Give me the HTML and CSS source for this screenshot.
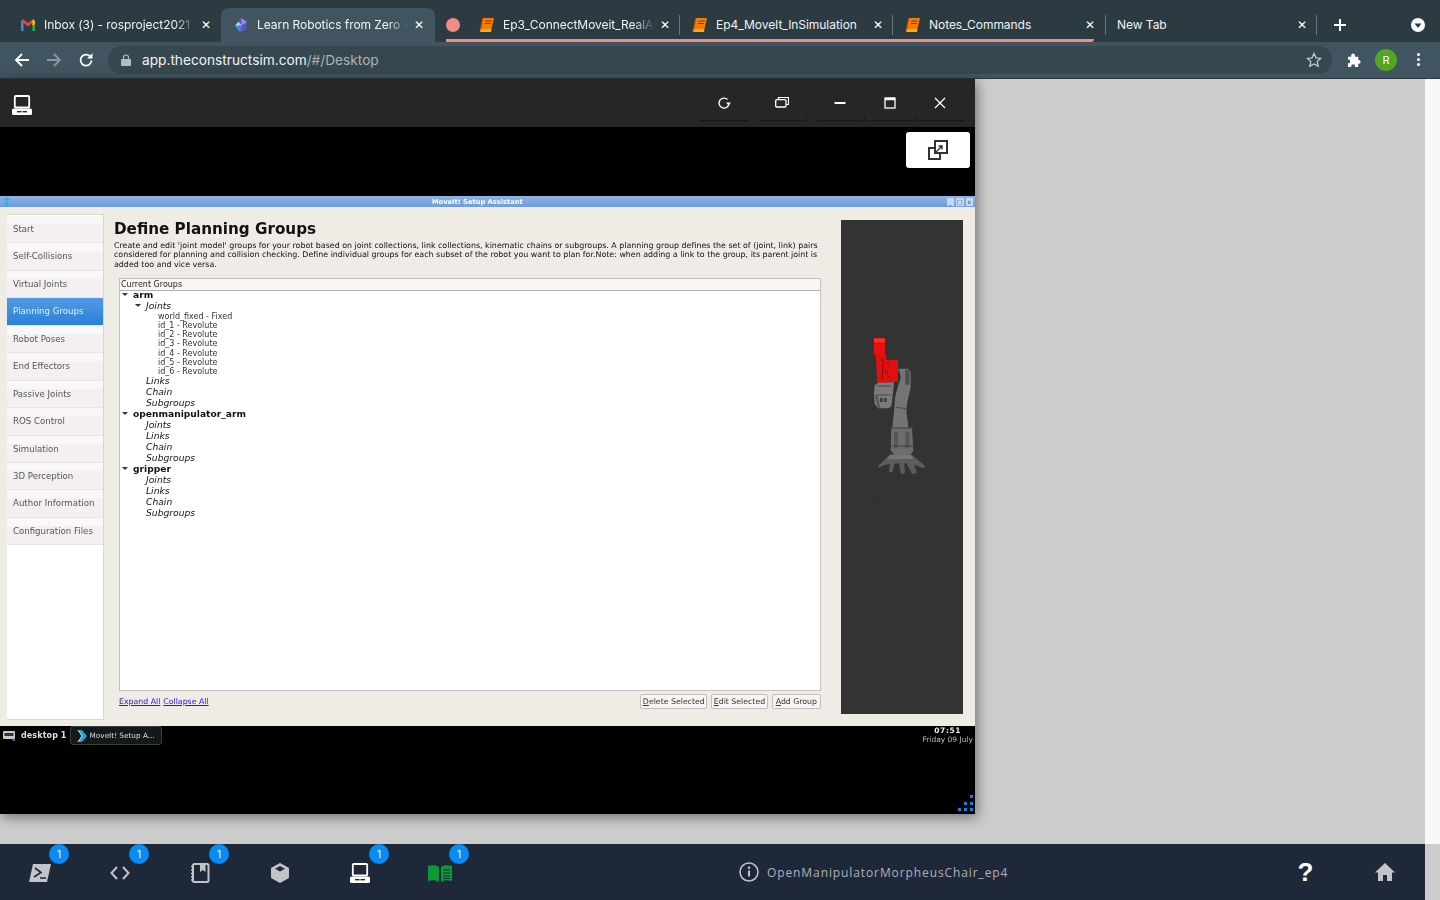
FILE: index.html
```html
<!DOCTYPE html>
<html lang="en">

<head>
    <meta charset="UTF-8">
    <title>Learn Robotics from Zero</title>
    <link rel="stylesheet" href="styles.css">
</head>

<body>
    <div class="tabstrip">
        <div class="tab tab-first">
            <svg class="favicon" viewBox="0 0 16 16"><path d="M1 14V4l2.500-1.500V14z" fill="#4285f4"/><path d="M15 14V4l-2.500-1.500V14z" fill="#34a853"/><path d="M1 4l7 5.500 7-5.500-2-2-5 4-5-4z" fill="#ea4335"/><path d="M12.500 2.500L15 4v3l-2.500 2z" fill="#fbbc04"/></svg>
            <span class="tab-title tab-fade">Inbox (3) - rosproject2021</span>
            <span class="tab-close">&#10005;</span>
        </div>
        <div class="tab tab-active">
            <svg class="favicon" viewBox="0 0 16 16"><path d="M8 1l6 4-1 8-6 2-5-6z" fill="#5a55c8"/><path d="M8 1l6 4-5 3z" fill="#9a8ee8"/><path d="M2 9l5 6 2-7z" fill="#3d8fd8"/><path d="M2 9l3-4 4 3z" fill="#bcd7f2"/></svg>
            <span class="tab-title tab-fade">Learn Robotics from Zero -</span>
            <span class="tab-close">&#10005;</span>
        </div>
        <div class="tab-group">
            <div class="group-dot-box"><span class="group-dot"></span></div>
            <div class="tab tab-grouped tab-ep3">
                <svg class="favicon" viewBox="0 0 16 16"><use href="#book"/></svg>
                <span class="tab-title tab-fade">Ep3_ConnectMoveit_RealA</span>
                <span class="tab-close">&#10005;</span>
            </div>
            <div class="tab tab-grouped">
                <svg class="favicon" viewBox="0 0 16 16"><use href="#book"/></svg>
                <span class="tab-title">Ep4_MoveIt_InSimulation</span>
                <span class="tab-close">&#10005;</span>
            </div>
            <div class="tab tab-grouped tab-last">
                <svg class="favicon" viewBox="0 0 16 16"><use href="#book"/></svg>
                <span class="tab-title">Notes_Commands</span>
                <span class="tab-close">&#10005;</span>
            </div>
        </div>
        <div class="tab tab-new">
            <span class="tab-title">New Tab</span>
            <span class="tab-close">&#10005;</span>
        </div>
        <svg class="new-tab" viewBox="0 0 14 14"><path d="M7 1v12M1 7h12" stroke="#fff" stroke-width="2"/></svg>
        <svg class="tab-search" viewBox="0 0 14 14"><circle cx="7" cy="7" r="7" fill="#fff"/><path d="M3.500 5.500h7L7 10z" fill="#2c3a42"/></svg>
    </div>

    <div class="toolbar">
        <svg class="nav-icon" viewBox="0 0 16 16"><path d="M15 8H2M8 2L2 8l6 6" fill="none" stroke="#fff" stroke-width="1.800"/></svg>
        <svg class="nav-icon" viewBox="0 0 16 16"><path d="M1 8h13M8 2l6 6-6 6" fill="none" stroke="#8b989f" stroke-width="1.800"/></svg>
        <svg class="nav-icon" viewBox="0 0 16 16"><path d="M13.500 8.500a5.500 5.500 0 1 1-1.600-4.300" fill="none" stroke="#fff" stroke-width="1.800"/><path d="M14.500 1v5.500H9z" fill="#fff"/></svg>
        <div class="omnibox">
            <svg class="lock" viewBox="0 0 10 12"><path d="M2.500 5V3.500a2.500 2.500 0 0 1 5 0V5" fill="none" stroke="#b4bcc1" stroke-width="1.200"/><rect y="5" width="10" height="7" rx="1" fill="#b4bcc1"/></svg>
            <span class="url">app.theconstructsim.com<span class="url-path">/#/Desktop</span></span>
            <svg class="star" viewBox="0 0 16 16"><path d="M8 1.500l2 4.400 4.700.5-3.500 3.200 1 4.700L8 11.900l-4.200 2.400 1-4.700L1.300 6.400 6 5.900z" fill="none" stroke="#c4cbcf" stroke-width="1.300"/></svg>
        </div>
        <svg class="puzzle" viewBox="0 0 16 16"><path d="M1 5h3.500V3.500a2 2 0 0 1 4 0V5H12v3.500h.5a2 2 0 0 1 0 4H12V16H8.500v-1a2 2 0 0 0-4 0v1H1v-4h.5a2 2 0 0 0 0-4H1z" fill="#fff"/></svg>
        <span class="avatar">R</span>
        <span class="menu-dots"><i></i><i></i><i></i></span>
    </div>

    <div class="main">
        <div class="stage">
            <div class="desktop">
                <div class="desk-head">
                    <svg class="desk-logo" viewBox="0 0 20 20"><use href="#computer"/></svg>
                    <div class="desk-controls">
                        <button class="ctl ctl-gap"><svg viewBox="0 0 14 14"><path d="M12 7a5 5 0 1 1-1.500-3.500" fill="none" stroke="#fff" stroke-width="1.300"/><path d="M14 6.500L11.500 9.500 9 6.500z" fill="#fff"/></svg></button>
                        <button class="ctl ctl-gap"><svg viewBox="0 0 14 14"><path d="M3.500 3V1.500h10v7H11" fill="none" stroke="#fff" stroke-width="1.200"/><rect x="0.700" y="3.700" width="10.300" height="7.300" rx="1" fill="none" stroke="#fff" stroke-width="1.300"/></svg></button>
                        <button class="ctl"><svg viewBox="0 0 14 14"><path d="M1.500 7h11" stroke="#fff" stroke-width="2"/></svg></button>
                        <button class="ctl"><svg viewBox="0 0 14 14"><rect x="2" y="2" width="10" height="10" fill="none" stroke="#fff" stroke-width="1.300"/><path d="M2 3h10" stroke="#fff" stroke-width="2.500"/></svg></button>
                        <button class="ctl"><svg viewBox="0 0 14 14"><path d="M2 2l10 10M12 2L2 12" stroke="#fff" stroke-width="1.300"/></svg></button>
                    </div>
                </div>

                <div class="vnc-top">
                    <button class="popout"><svg viewBox="0 0 20 20"><rect x="1" y="8" width="11" height="11" fill="none" stroke="#333" stroke-width="2"/><rect x="7" y="1" width="12" height="12" fill="#fff" stroke="#333" stroke-width="2"/><path d="M8 12l6-6M10.500 6H14v3.500" fill="none" stroke="#333" stroke-width="1.400"/></svg></button>
                </div>

                <div class="setup-window">
                    <div class="wm-title">
                        <svg class="wm-logo" viewBox="0 0 6 10"><path d="M3 0v10M0 2.500h6M0 7h6" stroke="#1fb0e8" stroke-width="1.200"/></svg>
                        <span class="wm-name">MoveIt! Setup Assistant</span>
                        <span class="wm-btns"><i>_</i><i>&#9633;</i><i>x</i></span>
                    </div>
                    <div class="setup-body">
                        <div class="steps">
                            <div class="step">Start</div>
                            <div class="step">Self-Collisions</div>
                            <div class="step">Virtual Joints</div>
                            <div class="step step-on">Planning Groups</div>
                            <div class="step">Robot Poses</div>
                            <div class="step">End Effectors</div>
                            <div class="step">Passive Joints</div>
                            <div class="step">ROS Control</div>
                            <div class="step">Simulation</div>
                            <div class="step">3D Perception</div>
                            <div class="step">Author Information</div>
                            <div class="step">Configuration Files</div>
                        </div>

                        <div class="groups">
                            <h1>Define Planning Groups</h1>
                            <p>Create and edit 'joint model' groups for your robot based on joint collections, link collections, kinematic chains or subgroups. A planning group defines the set of (joint, link) pairs considered for planning and collision checking. Define individual groups for each subset of the robot you want to plan for.Note: when adding a link to the group, its parent joint is added too and vice versa.</p>
                            <div class="tree">
                                <div class="tree-head">Current Groups</div>
                                <div class="tree-rows">
                                    <div class="row row-group"><i class="caret"></i>arm</div>
                                    <div class="row row-sub row-open"><i class="caret"></i>Joints</div>
                                    <div class="row row-joint">world_fixed - Fixed</div>
                                    <div class="row row-joint">id_1 - Revolute</div>
                                    <div class="row row-joint">id_2 - Revolute</div>
                                    <div class="row row-joint">id_3 - Revolute</div>
                                    <div class="row row-joint">id_4 - Revolute</div>
                                    <div class="row row-joint">id_5 - Revolute</div>
                                    <div class="row row-joint">id_6 - Revolute</div>
                                    <div class="row row-sub">Links</div>
                                    <div class="row row-sub">Chain</div>
                                    <div class="row row-sub">Subgroups</div>
                                    <div class="row row-group"><i class="caret"></i>openmanipulator_arm</div>
                                    <div class="row row-sub">Joints</div>
                                    <div class="row row-sub">Links</div>
                                    <div class="row row-sub">Chain</div>
                                    <div class="row row-sub">Subgroups</div>
                                    <div class="row row-group"><i class="caret"></i>gripper</div>
                                    <div class="row row-sub">Joints</div>
                                    <div class="row row-sub">Links</div>
                                    <div class="row row-sub">Chain</div>
                                    <div class="row row-sub">Subgroups</div>
                                </div>
                            </div>
                            <div class="tree-actions">
                                <a href="#">Expand All</a>
                                <a href="#">Collapse All</a>
                                <span class="spacer"></span>
                                <button class="qt-btn"><u>D</u>elete Selected</button>
                                <button class="qt-btn"><u>E</u>dit Selected</button>
                                <button class="qt-btn qt-btn-add"><u>A</u>dd Group</button>
                            </div>
                        </div>

                        <div class="viewport">
                            <svg class="robot" viewBox="33 -300 366 1482">
                                <!-- base foot -->
                                <path d="M145 437l36-34h62l42 34-2 8-30-10 8 24-14 3-18-32-6 0 2 30-12 3-6-33-14 2-6 25-10 0 2-25-18 4-16 8z" fill="#5c5c5c"/>
                                <path d="M180 405h64l6 12h-78z" fill="#767676"/>
                                <!-- lower body -->
                                <path d="M184 322h62l4 70-10 14h-46l-12-16z" fill="#6d6d6d"/>
                                <path d="M192 335h12v50h-12zM226 335h12v50h-12z" fill="#565656"/>
                                <path d="M184 324h64M184 378h66" stroke="#3f3f3f" stroke-width="3"/>
                                <!-- upper arm -->
                                <path d="M205 146h30l7 10v45l-10 45-3 26 6 50h-48l5-48 3-36 5-34z" fill="#747474"/>
                                <path d="M207 148l-15 40-8 42 14-12 14-45z" fill="#2f2f2f"/>
                                <path d="M226 150h12v44h-12z" fill="#4d4d4d"/>
                                <path d="M198 262l30 4M206 312h4" stroke="#484848" stroke-width="3"/>
                                <!-- elbow -->
                                <path d="M134 195l14-8 44 0-2 22-6 50-10 6h-30l-10-14-2-26z" fill="#7b7b7b"/>
                                <path d="M140 198h44M138 225h46" stroke="#4c4c4c" stroke-width="3"/>
                                <path d="M150 234h8v12h-8zM162 234h8v12h-8z" fill="#3c3c3c"/>
                                <path d="M134 225l10 38 8 2-10-40z" fill="#585858"/>
                                <!-- red gripper -->
                                <path d="M132 55h33v50h-33z" fill="#e81010"/>
                                <path d="M137 105h32v15h35v65l-62 3z" fill="#e01010"/>
                                <path d="M132 55h33v12h-33z" fill="#f53030"/>
                                <path d="M152 115l8 12-4 50M165 150l12 20M170 128h8" stroke="#7a1010" stroke-width="3" fill="none"/>
                                <!-- stray red specks on the floor -->
                                <path d="M200 462h12M220 505h6M138 525v28M296 470v24" stroke="#5a2020" stroke-width="3"/>
                            </svg>
                        </div>
                    </div>
                </div>

                <div class="taskbar">
                    <div class="task-top">
                        <svg class="pager-icon" viewBox="0 0 13 10"><rect width="12" height="8" rx="1" fill="#c9c9c9"/><rect x="1.500" y="2" width="9" height="3" fill="#333"/><path d="M9 8l3 1.500" stroke="#3b7ac8" stroke-width="1.500"/></svg>
                        <span class="pager-name">desktop 1</span>
                        <div class="task-btn">
                            <svg viewBox="0 0 11 14"><path d="M1 1l4 0 5 6-5 6H1l4-6z" fill="#1fa6e0"/><path d="M1 1l4 6-4 6" fill="none" stroke="#fff" stroke-width=".8"/></svg>
                            <span>MoveIt! Setup A...</span>
                        </div>
                        <div class="clock">
                            <div class="clock-time">07:51</div>
                            <div class="clock-date">Friday 09 July</div>
                        </div>
                    </div>
                    <div class="task-foot">
                        <span class="grip"><i></i><i></i><i></i><i></i><i></i><i></i><i></i><i></i><i></i></span>
                    </div>
                </div>
            </div>
        </div>
        <div class="edge"></div>
    </div>

    <div class="dock">
        <div class="dock-item">
            <span class="badge">1</span>
            <svg viewBox="0 0 22 20" width="22" height="20"><path d="M4 1h18l-4 18H0z" fill="#c2c4c8"/><path d="M6 5l6 4.500-7 4.500" fill="none" stroke="#1e2838" stroke-width="1.600"/><path d="M11 15h6" stroke="#1e2838" stroke-width="1.500"/></svg>
        </div>
        <div class="dock-item">
            <span class="badge">1</span>
            <svg viewBox="0 0 20 14" width="20" height="14"><path d="M7 1L1.500 7 7 13M13 1l5.500 6L13 13" fill="none" stroke="#c2c4c8" stroke-width="2"/></svg>
        </div>
        <div class="dock-item">
            <span class="badge">1</span>
            <svg viewBox="0 0 20 20" width="20" height="20"><rect x="3" y="1" width="15.500" height="18" rx="1.500" fill="none" stroke="#c2c4c8" stroke-width="2"/><path d="M10 1h5.500v8l-2.700-2-2.800 2z" fill="#c2c4c8"/><path d="M1 3.500h3M1 7h3M1 10.500h3M1 14h3M1 17h3" stroke="#c2c4c8" stroke-width="1.300"/></svg>
        </div>
        <div class="dock-item">
            <svg viewBox="0 0 20 20" width="20" height="20"><path d="M10 0l9 5v10l-9 5-9-5V5z" fill="#c2c4c8"/><path d="M10 3l5 2.800-5 2.800-5-2.800z" fill="#1e2838"/></svg>
        </div>
        <div class="dock-item">
            <span class="badge">1</span>
            <svg viewBox="0 0 20 20" width="20" height="20"><use href="#computer"/></svg>
        </div>
        <div class="dock-item">
            <span class="badge">1</span>
            <svg viewBox="0 0 24 18" width="24" height="18"><path d="M0 2c4-1.500 8-1 11 1v15c-3-2-7-2-11-1z" fill="#0b9a35"/><path d="M24 2c-4-1.500-8-1-11 1v15c3-2 7-2 11-1z" fill="#0b9a35"/><path d="M15 6h7M15 9h7M15 12h7M15 14.500h7" stroke="#1e2838" stroke-width="1"/></svg>
        </div>
        <div class="sim-name">
            <svg viewBox="0 0 20 20" width="20" height="20"><circle cx="10" cy="10" r="9" fill="none" stroke="#c2c4c8" stroke-width="1.500"/><path d="M10 8.500v6" stroke="#c2c4c8" stroke-width="2"/><circle cx="10" cy="5.800" r="1.200" fill="#c2c4c8"/></svg>
            <span>OpenManipulatorMorpheusChair_ep4</span>
        </div>
        <span class="help">?</span>
        <svg class="home" viewBox="0 0 20 18" width="20" height="18"><path d="M10 0L0 9.500h3V18h5v-6h4v6h5V9.500h3z" fill="#c2c4c8"/></svg>
    </div>

    <svg class="defs" width="0" height="0">
        <symbol id="book" viewBox="0 0 16 16"><path d="M4 1h11l-2.500 11H2z" fill="#f57c00"/><path d="M2 12h10.500L12 15H2.500A1.500 1.500 0 0 1 2 12z" fill="#ffa726"/><path d="M1.500 13.500L4 1" stroke="#e65100" stroke-width="1.200"/><path d="M6.500 4h6M6 6.500h6" stroke="#7a3e00" stroke-width="1"/></symbol>
        <symbol id="computer" viewBox="0 0 20 20"><rect x="2.800" y="1" width="14.400" height="11.500" rx="1" fill="none" stroke="#fff" stroke-width="1.800"/><rect y="13.500" width="20" height="6.500" rx="1.500" fill="#fff"/><path d="M5 16.700h10" stroke="#1e1e1e" stroke-width="1.300"/><path d="M10 15.500v2.400" stroke="#fff" stroke-width="1"/></symbol>
    </svg>
</body>

</html>
```

FILE: styles.css
```css
html, body {
    margin: 0;
    height: 900px;
    overflow: hidden;
}

body {
    display: flex;
    flex-direction: column;
    font-family: 'Inter', 'Liberation Sans', sans-serif;
    background-color: #ccc;
}

.defs {
    display: none;
}

/* browser tabs */
.tabstrip {
    display: flex;
    align-items: stretch;
    height: 42px;
    padding: 8px 0 0 8px;
    box-sizing: border-box;
    background-color: #2c3a42;
}

.tabstrip > * {
    flex: none;
}

.tab {
    display: flex;
    flex: none;
    align-items: center;
    width: 213px;
    box-sizing: border-box;
    padding: 0 9px 0 12px;
    color: #f1f3f4;
    font-size: 12px;
    letter-spacing: -0.050px;
}

.tab-first {
    padding-bottom: 1px;
}

.tab-active {
    width: 214px;
    padding: 0 10px 1px 12px;
    background-color: #405560;
    border-radius: 8px 8px 0 0;
}

.favicon {
    flex: none;
    width: 16px;
    height: 16px;
    margin-right: 8px;
}

.tab-title {
    flex: 1;
    min-width: 0;
    overflow: hidden;
    white-space: nowrap;
}

.tab-fade {
    -webkit-mask-image: linear-gradient(to right, #000 86%, transparent 100%);
    mask-image: linear-gradient(to right, #000 86%, transparent 100%);
}

.tab-close {
    flex: none;
    width: 12px;
    margin-left: 4px;
    color: #fff;
    font-size: 12px;
    text-align: center;
}

.tab-group {
    display: flex;
    height: 34px;
    margin-left: 11px;
    border-bottom: 3px solid #f28b82;
    border-bottom-right-radius: 3px;
    box-sizing: border-box;
}

.group-dot-box {
    display: flex;
    align-items: center;
    width: 14px;
    padding-top: 3px;
}

.group-dot {
    width: 14px;
    height: 14px;
    border-radius: 50%;
    background-color: #f28b82;
}

.tab-grouped {
    position: relative;
    padding-top: 2px;
}

.tab-ep3 {
    margin-left: 7px;
}

.tab-grouped::after {
    content: '';
    position: absolute;
    right: 0;
    top: 7px;
    height: 20px;
    width: 1px;
    background-color: #66757d;
}

.tab-last {
    width: 201px;
    padding-right: 0;
}

.tab-last .tab-close {
    margin-right: -2px;
}

.tab-last::after {
    display: none;
}

.tab-new {
    position: relative;
    width: 223px;
    padding: 0 9px 1px 23px;
}

.tab-new::after,
.tab-new::before {
    content: '';
    position: absolute;
    top: 7px;
    height: 20px;
    width: 1px;
    background-color: #66757d;
}

.tab-new::after {
    right: 0;
}

.tab-new::before {
    left: 11px;
}

.new-tab {
    width: 14px;
    height: 14px;
    margin: 10px 0 0 16px;
}

.tab-search {
    width: 14px;
    height: 14px;
    margin: 10px 0 0 64px;
}

/* browser toolbar */
.toolbar {
    display: flex;
    align-items: center;
    height: 37px;
    box-sizing: border-box;
    padding: 0 16px 1px 14px;
    background-color: #405560;
    border-bottom: 1px solid #2a383f;
}

.nav-icon {
    width: 16px;
    height: 16px;
    margin-right: 16px;
}

.omnibox {
    display: flex;
    align-items: center;
    width: 1224px;
    height: 28px;
    margin-left: -2px;
    padding: 0 10px 0 13px;
    box-sizing: border-box;
    border-radius: 14px;
    background-color: #36474f;
}

.lock {
    width: 10px;
    height: 12px;
    margin-right: 11px;
}

.url {
    flex: 1;
    color: #f1f3f4;
    font-size: 13.700px;
}

.url-path {
    color: #a9b3b8;
}

.star {
    width: 16px;
    height: 16px;
}

.puzzle {
    width: 15px;
    height: 15px;
    margin-left: 15px;
}

.avatar {
    width: 22px;
    height: 22px;
    margin-left: 13px;
    border-radius: 50%;
    background-color: #53a524;
    color: #fff;
    font-size: 11px;
    line-height: 22px;
    text-align: center;
}

.menu-dots {
    display: flex;
    flex-direction: column;
    gap: 2px;
    margin-left: 20px;
}

.menu-dots i {
    width: 3px;
    height: 3px;
    border-radius: 50%;
    background-color: #fff;
}

/* page */
.main {
    display: flex;
    height: 765px;
}

.stage {
    flex: 1;
    background-color: #ccc;
}

.edge {
    width: 15px;
    background-color: #f8f8f8;
}

.desktop {
    display: flex;
    flex-direction: column;
    width: 975px;
    height: 735px;
    background-color: #000;
    box-shadow: 2px 3px 12px rgba(0, 0, 0, 0.45);
}

.desk-head {
    display: flex;
    align-items: center;
    justify-content: space-between;
    height: 48px;
    padding: 0 10px 0 12px;
    box-sizing: border-box;
    background-color: #262626;
}

.desk-logo {
    width: 20px;
    height: 20px;
    margin-top: 4px;
}

.desk-controls {
    display: flex;
    margin-bottom: 1px;
}

.ctl {
    display: flex;
    align-items: center;
    justify-content: center;
    width: 50px;
    height: 34px;
    padding: 0;
    border: none;
    border-radius: 3px;
    background-color: #262626;
    box-shadow: 0 1px 1px rgba(0, 0, 0, 0.4);
}

.ctl-gap {
    margin-right: 8px;
}

.ctl svg {
    width: 14px;
    height: 14px;
}

.vnc-top {
    display: flex;
    justify-content: flex-end;
    height: 69px;
    padding: 5px 5px 0 0;
    box-sizing: border-box;
}

.popout {
    display: flex;
    align-items: center;
    justify-content: center;
    width: 64px;
    height: 36px;
    padding: 0;
    border: none;
    border-radius: 3px;
    background-color: #fff;
}

.popout svg {
    width: 20px;
    height: 20px;
}

/* moveit window */
.setup-window {
    display: flex;
    flex-direction: column;
    height: 530px;
    background-color: #efebe5;
    color: #111;
    font-family: 'DejaVu Sans', sans-serif;
    filter: blur(0.35px);
}

.wm-title {
    display: flex;
    align-items: center;
    height: 11px;
    padding: 0 2px 0 4px;
    background: linear-gradient(#8fb4e8, #6f9cdc);
}

.wm-logo {
    width: 6px;
    height: 10px;
}

.wm-name {
    flex: 1;
    padding-right: 2px;
    color: #fff;
    font-size: 6.700px;
    font-weight: bold;
    text-align: center;
}

.wm-btns {
    display: flex;
    gap: 2px;
}

.wm-btns i {
    width: 7.500px;
    height: 8px;
    background-color: #c9d8ef;
    color: #33517f;
    font-size: 6px;
    font-style: normal;
    line-height: 7px;
    text-align: center;
}

.setup-body {
    display: flex;
    flex: 1;
    padding: 7px 12px 6px 7px;
    min-height: 0;
}

.steps {
    flex: none;
    width: 97px;
    height: 506px;
    box-sizing: border-box;
    padding-top: 1px;
    border-top: 1px solid #d9d5cf;
    border-right: 1px solid #d9d5cf;
    border-bottom: 1px solid #d9d5cf;
    background-color: #fff;
}

.step {
    height: 27.450px;
    box-sizing: border-box;
    padding-left: 6px;
    border-bottom: 1px solid #e9e5e2;
    background: linear-gradient(#f9f7f7 30%, #f4eff3 32%);
    color: #555;
    font-size: 8.600px;
    line-height: 27.450px;
}

.step-on {
    background: linear-gradient(#549ae4, #2a80d8);
    color: #e3effb;
}

.groups {
    display: flex;
    flex-direction: column;
    width: 707px;
    margin-left: 10px;
}

.groups h1 {
    margin: 6px 0 0;
    font-size: 15.200px;
    line-height: 19px;
}

.groups p {
    margin: 2px 0 0;
    font-size: 7.920px;
    line-height: 9.300px;
}

.tree {
    display: flex;
    flex-direction: column;
    width: 702px;
    height: 413px;
    margin: 9px 0 0 5px;
    box-sizing: border-box;
    border: 1px solid #c4c0ba;
    background-color: #fff;
}

.tree-head {
    height: 11px;
    padding-left: 1px;
    background-color: #fbf7f5;
    border-bottom: 1px solid #b5b1ac;
    font-size: 8px;
    line-height: 12px;
    color: #222;
}

.tree-rows {
    margin-top: -2px;
}

.row {
    position: relative;
    height: 11px;
    line-height: 11px;
    white-space: nowrap;
}

.row-group {
    padding-left: 13px;
    font-size: 9.150px;
    font-weight: bold;
    line-height: 13px;
}

.row-sub {
    padding-left: 26px;
    font-size: 9.200px;
    font-style: italic;
}

.row-joint {
    height: 9.180px;
    padding-left: 38px;
    color: #333;
    font-size: 8px;
}

.caret {
    position: absolute;
    left: 2px;
    top: 4px;
    width: 0;
    height: 0;
    border-left: 3px solid transparent;
    border-right: 3px solid transparent;
    border-top: 3px solid #333;
}

.row-open .caret {
    left: 15px;
}

.tree-actions {
    display: flex;
    align-items: center;
    gap: 3px;
    height: 15px;
    margin: 3px 0 0 5px;
    width: 702px;
}

.tree-actions a {
    color: #2a18d8;
    font-size: 7.800px;
}

.spacer {
    flex: 1;
}

.qt-btn {
    height: 15px;
    padding: 1px 1.500px 0;
    border: 1px solid #c2beb8;
    border-radius: 2px;
    background-color: #f7f4f1;
    color: #333;
    font-family: inherit;
    font-size: 7.800px;
    line-height: 12px;
}

.qt-btn + .qt-btn {
    margin-left: 1px;
}

.qt-btn-add {
    padding: 1px 3px 0;
}

.viewport {
    flex: none;
    width: 122px;
    height: 494px;
    margin: 6px 0 0 20px;
    background-color: #333;
}

.robot {
    display: block;
    width: 122px;
    height: 494px;
}

/* vnc taskbar */
.taskbar {
    display: flex;
    flex-direction: column;
    flex: 1;
    color: #ddd;
    font-family: 'DejaVu Sans', sans-serif;
}

.task-top {
    display: flex;
    align-items: flex-start;
    padding-left: 3px;
    filter: blur(0.25px);
}

.pager-icon {
    width: 13px;
    height: 10px;
    margin: 5px 0 0;
}

.pager-name {
    margin: 5px 0 0 5px;
    font-size: 8px;
    font-weight: bold;
    letter-spacing: 0.100px;
}

.task-btn {
    display: flex;
    align-items: center;
    gap: 2px;
    width: 92px;
    height: 19px;
    margin-left: 3px;
    padding-left: 6px;
    box-sizing: border-box;
    border: 1px solid #3a3f3f;
    border-radius: 3px;
    background-color: #131818;
    font-size: 7.300px;
}

.task-btn svg {
    width: 11px;
    height: 14px;
}

.clock {
    margin-left: auto;
    padding: 1px 2px 0 0;
    text-align: center;
    font-size: 7.500px;
    line-height: 8.500px;
}

.clock-time {
    color: #eee;
    font-weight: bold;
    letter-spacing: 0.600px;
}

.clock-date {
    color: #bbb;
}

.task-foot {
    display: flex;
    justify-content: flex-end;
    align-items: flex-end;
    flex: 1;
    padding: 0 2px 3px 0;
}

.grip {
    display: grid;
    grid-template-columns: repeat(3, 3px);
    grid-template-rows: repeat(3, 3px);
    gap: 3.500px 3px;
}

/* the 3 empty cells leave the stepped corner */
.grip i {
    background-color: #0a84e8;
}

.grip i:nth-child(1),
.grip i:nth-child(2),
.grip i:nth-child(4) {
    background-color: transparent;
}

/* dock */
.dock {
    display: flex;
    align-items: center;
    width: 1425px;
    height: 56px;
    background-color: #1e2838;
}

.dock-item {
    position: relative;
    display: flex;
    align-items: center;
    justify-content: center;
    width: 80px;
    height: 56px;
    padding-top: 1px;
    box-sizing: border-box;
}

.badge {
    position: absolute;
    top: 0;
    left: 49px;
    width: 20px;
    height: 20px;
    border-radius: 50%;
    background-color: #0a8cf5;
    color: #fff;
    font-size: 10px;
    line-height: 20px;
    text-align: center;
}

.sim-name {
    display: flex;
    align-items: center;
    gap: 8px;
    margin-left: 259px;
    color: #aeb2b8;
    font-family: 'Open Sans', sans-serif;
    font-size: 12px;
    letter-spacing: 0.900px;
}

.help {
    margin-left: 289px;
    color: #fff;
    font-family: 'Liberation Sans', sans-serif;
    font-size: 26px;
    font-weight: bold;
}

.home {
    margin-left: 62px;
}
```
